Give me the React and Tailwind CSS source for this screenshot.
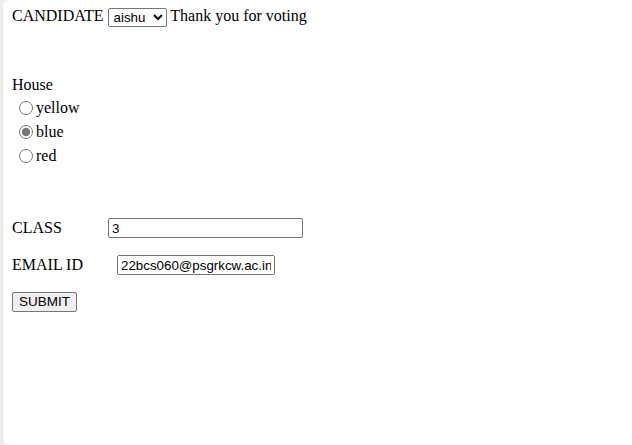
import React, { useState } from 'react';

const houses = ['yellow', 'blue', 'red'];

const App = () => {
    const [house, setHouse] = useState('blue');

    return (
        <div className="flex min-h-[445px] bg-[#ececec]">
            <div className="ml-[3px] flex-1 bg-white rounded-l-[6px] pl-[9px] pt-[5px] font-['Liberation_Serif',serif] text-[16px] text-black">
                {/* Candidate row */}
                <div className="leading-[22px]">
                    CANDIDATE{' '}
                    <select
                        defaultValue="aishu"
                        className="h-[19px] w-[59px] border border-[#767676] rounded-[2px] bg-white pl-[1px] font-['Liberation_Sans',Arial,sans-serif] text-[13.33px] align-middle"
                    >
                        <option value="aishu">aishu</option>
                        <option value="priya">priya</option>
                    </select>{' '}
                    Thank you for voting
                </div>

                {/* House */}
                <div className="mt-[47px] leading-[22px]">House</div>
                <div>
                    {houses.map((h) => (
                        <label key={h} className="flex items-center h-[24px]">
                            <input
                                type="radio"
                                name="house"
                                checked={house === h}
                                onChange={() => setHouse(h)}
                                className="m-0 ml-[7px] mr-[3px] w-[14px] h-[14px] accent-[#777777]"
                            />
                            <span>{h}</span>
                        </label>
                    ))}
                </div>

                {/* Class / Email */}
                <div className="mt-[50px] flex items-center h-[20px]">
                    <span className="w-[96px]">CLASS</span>
                    <input
                        type="text"
                        defaultValue="3"
                        className="h-[20px] w-[195px] border border-[#767676] rounded-[2px] px-[3px] font-['Liberation_Sans',Arial,sans-serif] text-[13.33px]"
                    />
                </div>
                <div className="mt-[17px] flex items-center h-[20px]">
                    <span className="w-[105px]">EMAIL ID</span>
                    <input
                        type="text"
                        defaultValue="22bcs060@psgrkcw.ac.in"
                        className="h-[20px] w-[158px] border border-[#767676] rounded-[2px] px-[3px] font-['Liberation_Sans',Arial,sans-serif] text-[13.33px]"
                    />
                </div>

                <button className="mt-[17px] h-[20px] w-[65px] border border-[#767676] rounded-[2px] bg-[#efefef] font-['Liberation_Sans',Arial,sans-serif] text-[13.5px] leading-none">
                    SUBMIT
                </button>
            </div>
        </div>
    );
};

export default App;
